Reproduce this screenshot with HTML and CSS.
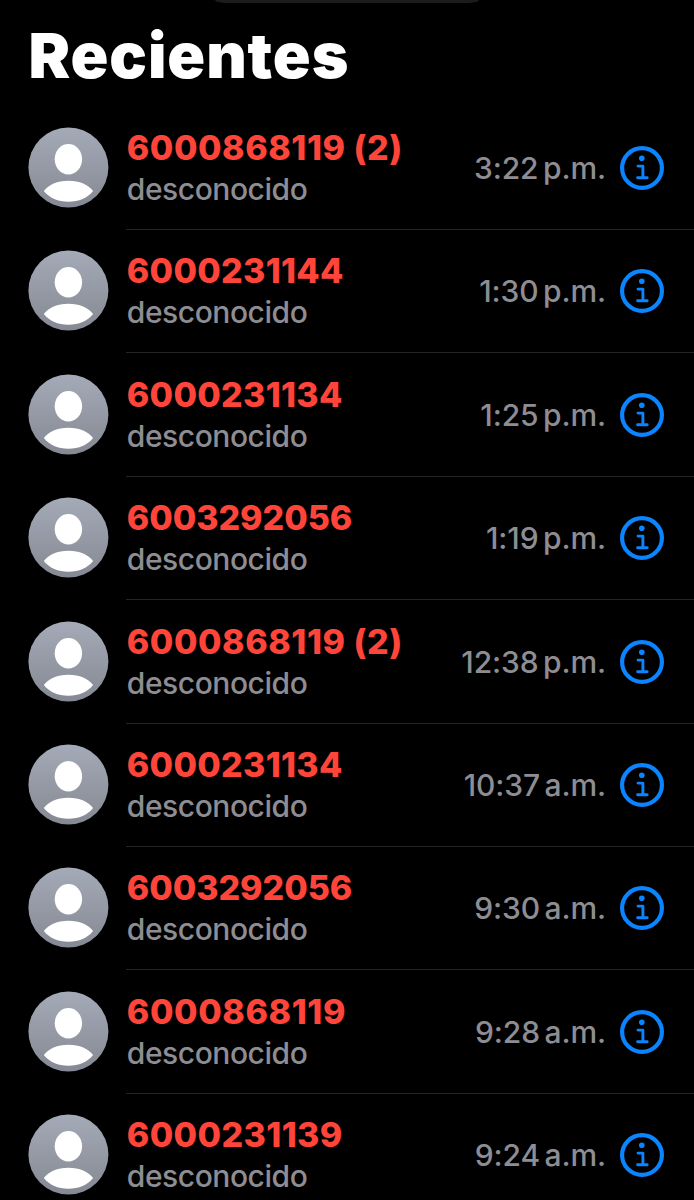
FILE: index.html
```
<!DOCTYPE html>
<html lang="es">
<head>
<meta charset="utf-8">
<title>Recientes</title>
<link rel="stylesheet" href="styles.css">
</head>
<body>
<svg class="defs" width="0" height="0" aria-hidden="true">
  <defs>
    <linearGradient id="shade" x1="0" y1="0" x2="0" y2="1">
      <stop offset="0" stop-color="#a4aab7"/>
      <stop offset="1" stop-color="#858993"/>
    </linearGradient>
    <symbol id="person" viewBox="0 0 81 81">
      <circle cx="40.400" cy="40.500" r="40" fill="url(#shade)"/>
      <ellipse cx="40.400" cy="32.300" rx="13.700" ry="15.200" fill="#fff"/>
      <path d="M15.800 64C20.700 57.800 29.200 53.700 40.400 53.700S60.200 57.800 65.100 64C59.700 70.800 50.700 74.800 40.400 74.800S21.200 70.800 15.800 64Z" fill="#fff"/>
    </symbol>
    <symbol id="info" viewBox="0 0 44 44">
      <circle cx="22" cy="22" r="19.900" fill="none" stroke="#0a84ff" stroke-width="4.200"/>
      <circle cx="21.800" cy="12.300" r="2.800" fill="#0a84ff"/>
      <path d="M18 20.100H22.900V31.700M17.600 31.700H27.200" fill="none" stroke="#0a84ff" stroke-width="2.900" stroke-linecap="round" stroke-linejoin="round"/>
    </symbol>
  </defs>
</svg>
<main class="screen">
  <div class="notch"></div>
  <h1 class="title">Recientes</h1>
  <ul class="calls" id="calls"></ul>
</main>
<script src="app.js"></script>
</body>
</html>
```
FILE: styles.css
```
body {
  margin: 0;
  background: #000;
  font-family: Inter, "Liberation Sans", sans-serif;
}

.defs {
  display: block;
}

.screen {
  width: 694px;
  height: 1200px;
  overflow: hidden;
  background: #000;
}

.notch {
  width: 264px;
  height: 3px;
  margin: 0 auto;
  background: #1c1c1e;
  border-radius: 0 0 12px 12px / 0 0 3px 3px;
}

.title {
  height: 103.6px;
  margin: 0;
  padding-left: 28.5px;
  box-sizing: border-box;
  padding-top: 14px;
  color: #fff;
  font-size: 62.5px;
  font-weight: 900;
  line-height: 76px;
  letter-spacing: 0.9px;
}

.calls {
  margin: 0;
  padding: 0;
  list-style: none;
}

.call {
  display: flex;
  height: 123.4px;
  padding-left: 28px;
}

.avatar {
  flex: none;
  width: 81px;
  height: 81px;
  margin-top: 20.4px;
}

.body {
  display: flex;
  flex: 1;
  box-sizing: border-box;
  margin-left: 17px;
  padding-right: 30px;
  border-bottom: 1px solid #252527;
}

.who {
  flex: 1;
  padding-top: 20.4px;
  padding-left: 0.8px;
  white-space: nowrap;
}

.number,
.label {
  display: block;
  line-height: 42px;
}

.number {
  color: #ff453a;
  font-size: 34px;
  font-weight: 800;
}

.label {
  margin-top: -1px;
  color: #8d8d93;
  font-size: 30px;
  font-weight: 500;
  letter-spacing: -0.45px;
}

.time {
  padding-top: 40.4px;
  color: #8d8d93;
  font-size: 30px;
  font-weight: 550;
  line-height: 42px;
  letter-spacing: -0.1px;
  white-space: nowrap;
}

.gap {
  display: inline-block;
  width: 4.5px;
}

.info {
  flex: none;
  width: 44px;
  height: 44px;
  margin: 39.4px 0 0 14px;
}
```
FILE: app.js
```
// Each entry: number, tracking of the number in px, time, half of the day.
const calls = [
  ["6000868119 (2)", 0.55, "3:22", "p.m."],
  ["6000231144", 0.3, "1:30", "p.m."],
  ["6000231134", 0.3, "1:25", "p.m."],
  ["6003292056", -0.05, "1:19", "p.m."],
  ["6000868119 (2)", 0.55, "12:38", "p.m."],
  ["6000231134", 0.3, "10:37", "a.m."],
  ["6003292056", -0.05, "9:30", "a.m."],
  ["6000868119", 0.6, "9:28", "a.m."],
  ["6000231139", 0.4, "9:24", "a.m."]
];

document.getElementById("calls").innerHTML = calls.map(([number, tracking, time, half]) => `
  <li class="call">
    <svg class="avatar"><use href="#person"/></svg>
    <div class="body">
      <div class="who"><span class="number" style="letter-spacing: ${tracking}px">${number}</span><span class="label">desconocido</span></div>
      <div class="time">${time}<span class="gap"></span>${half}</div>
      <svg class="info"><use href="#info"/></svg>
    </div>
  </li>`).join("");
```
